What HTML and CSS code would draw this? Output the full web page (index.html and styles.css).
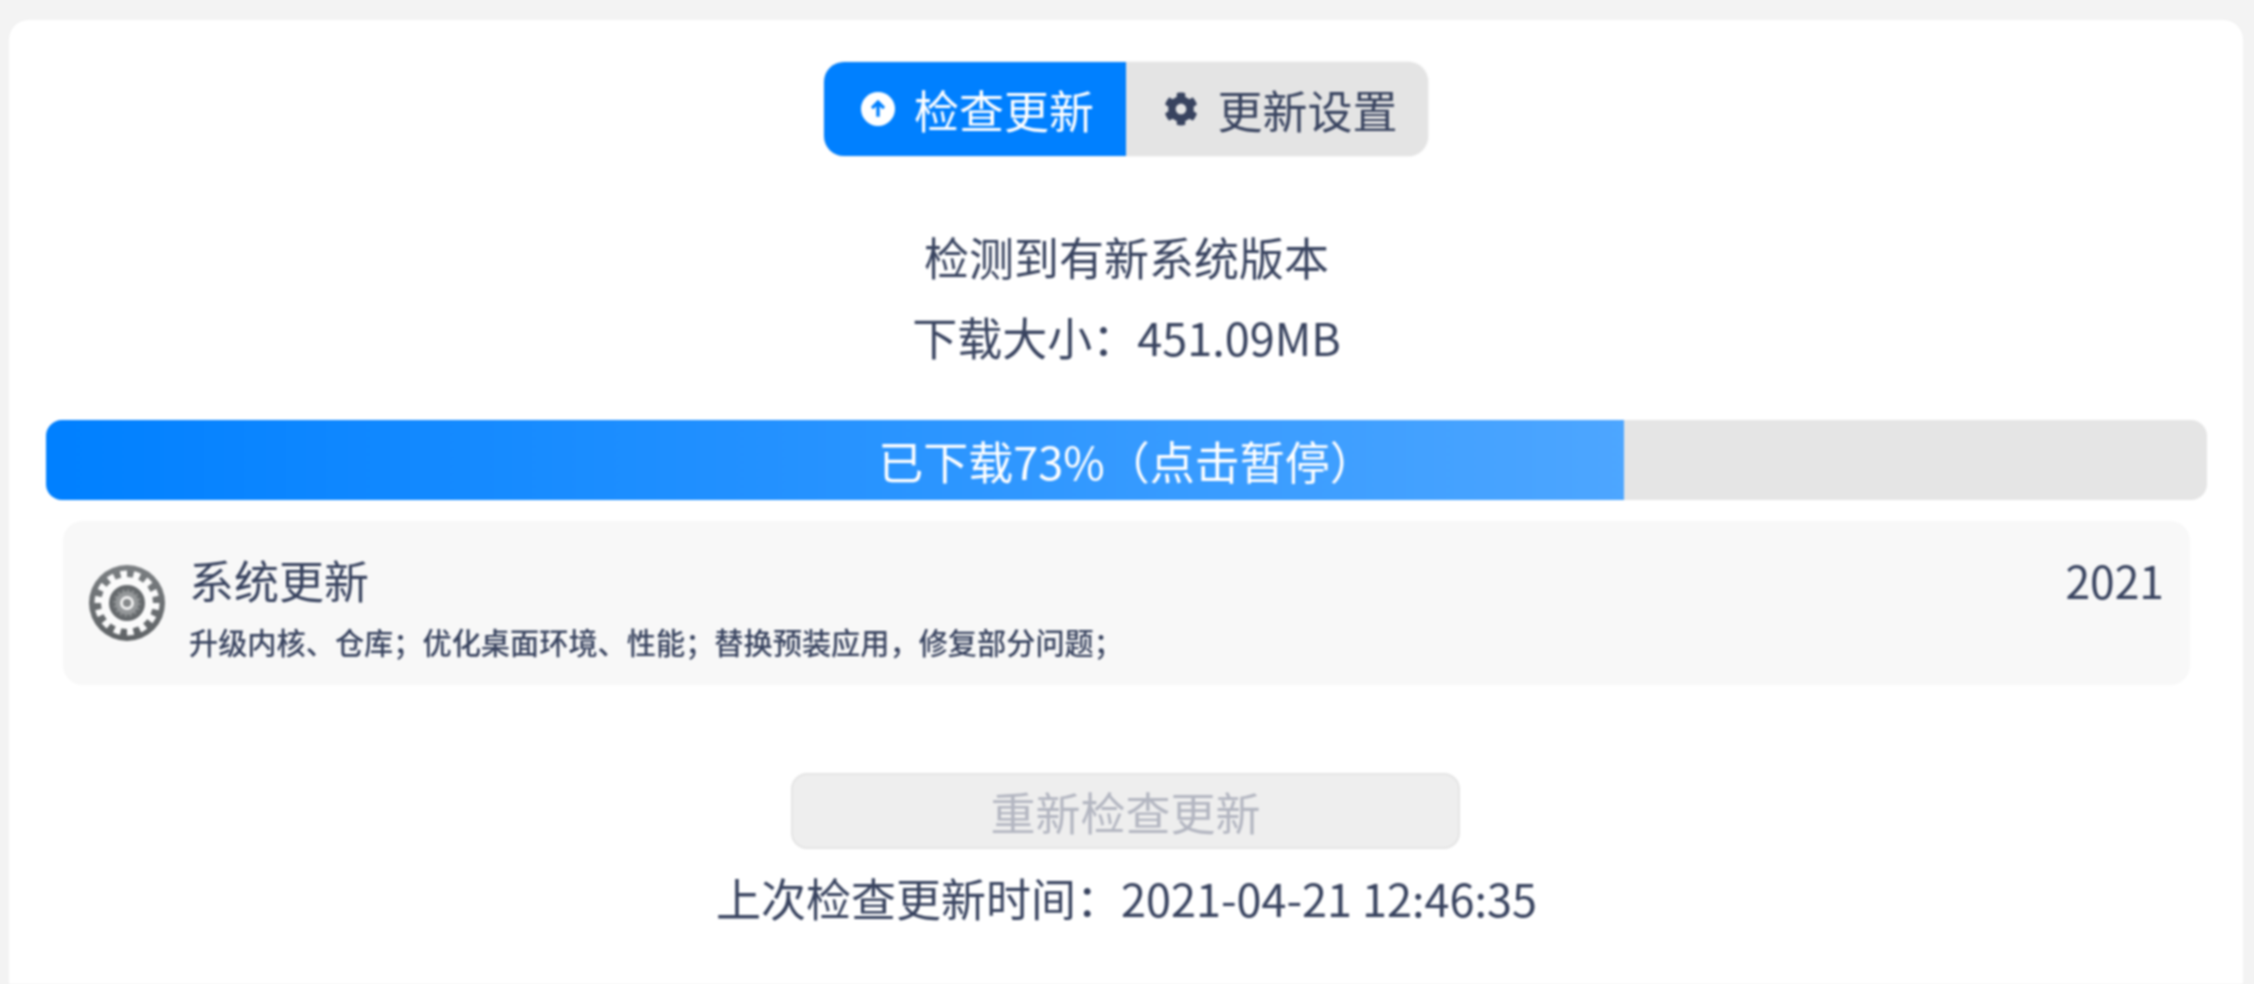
FILE: index.html
```html
<!DOCTYPE html>
<html lang="zh-CN">
<head>
    <meta charset="UTF-8">
    <meta name="viewport" content="width=device-width, initial-scale=1.0">
    <title>系统更新</title>
    <link rel="stylesheet" href="styles.css">
</head>
<body>

    <div class="card">
        <div class="tabs">
            <button class="tab tab-active">
                <svg class="tab-icon" viewBox="0 0 24 24">
                    <circle cx="12" cy="12" r="12" fill="#fff"/>
                    <path d="M12 17.5V7.5M7.8 11.4 12 7.2l4.2 4.2" fill="none" stroke="#0080ff" stroke-width="2.4"/>
                </svg>
                检查更新
            </button>
            <button class="tab tab-settings">
                <svg class="tab-icon" viewBox="0 0 512 512"><path fill="currentColor" d="M487.4 315.7l-42.6-24.6c4.3-23.2 4.3-47 0-70.2l42.6-24.6c4.9-2.8 7.1-8.6 5.5-14-11.1-35.6-30-67.8-54.7-94.6-3.8-4.1-10-5.1-14.8-2.3L380.8 110c-17.9-15.4-38.5-27.3-60.8-35.1V25.8c0-5.6-3.9-10.5-9.4-11.7-36.7-8.2-74.3-7.8-109.2 0-5.5 1.2-9.4 6.1-9.4 11.7V75c-22.2 7.9-42.8 19.8-60.8 35.1L88.7 85.5c-4.9-2.8-11-1.9-14.8 2.3-24.7 26.7-43.6 58.9-54.7 94.6-1.7 5.4.6 11.2 5.5 14L67.3 221c-4.3 23.2-4.3 47 0 70.2l-42.6 24.6c-4.9 2.8-7.1 8.6-5.5 14 11.1 35.6 30 67.8 54.7 94.6 3.8 4.1 10 5.1 14.8 2.3l42.6-24.6c17.9 15.4 38.5 27.3 60.8 35.1v49.2c0 5.6 3.9 10.5 9.4 11.7 36.7 8.2 74.3 7.8 109.2 0 5.5-1.2 9.4-6.1 9.4-11.7v-49.2c22.2-7.9 42.8-19.8 60.8-35.1l42.6 24.6c4.9 2.8 11 1.9 14.8-2.3 24.7-26.7 43.6-58.9 54.7-94.6 1.5-5.5-.7-11.3-5.6-14.1zM256 336c-44.1 0-80-35.9-80-80s35.9-80 80-80 80 35.9 80 80-35.9 80-80 80z"/></svg>
                更新设置
            </button>
        </div>

        <p class="status status-first">检测到有新系统版本</p>
        <p class="status">下载大小：451.09MB</p>

        <div class="progress">
            <div class="progress-fill" style="width: 73%"></div>
            <span class="progress-label">已下载73%（点击暂停）</span>
        </div>

        <div class="update-item">
            <svg class="update-icon" viewBox="0 0 76 76">
                <defs>
                    <linearGradient id="gearBg" x1="0" y1="0" x2="0" y2="1">
                        <stop offset="0" stop-color="#7b7f82"/>
                        <stop offset="1" stop-color="#5f6366"/>
                    </linearGradient>
                </defs>
                <circle cx="38" cy="38" r="38" fill="url(#gearBg)"/>
                <circle cx="38" cy="38" r="26" fill="#fbfbfb"/>
                <circle cx="38" cy="38" r="28.5" fill="none" stroke="#fbfbfb" stroke-width="8" pathLength="28" stroke-dasharray="1 1"/>
                <circle cx="38" cy="38" r="18" fill="#65696c"/>
                <circle cx="38" cy="38" r="11.5" fill="#95989a"/>
                <circle cx="38" cy="38" r="12.5" fill="none" stroke="#8b8e90" stroke-width="2.5" pathLength="32" stroke-dasharray="1 1"/>
                <circle cx="38" cy="38" r="7" fill="#f0f0f0"/>
                <circle cx="38" cy="38" r="4" fill="#85888a"/>
            </svg>
            <div class="update-body">
                <div class="update-title">系统更新</div>
                <div class="update-desc">升级内核、仓库；优化桌面环境、性能；替换预装应用，修复部分问题；</div>
            </div>
            <div class="update-year">2021</div>
        </div>

        <button class="recheck" disabled>重新检查更新</button>
        <p class="last-check">上次检查更新时间：2021-04-21 12:46:35</p>
    </div>

</body>
</html>
```

FILE: styles.css
```css
* {
    box-sizing: border-box;
}
html, body {
    height: 100%;
}
body {
    margin: 0;
    padding: 20px 11px 0 9px;
    overflow: hidden;
    background: #f3f3f3;
    color: #38435f;
    font-family: "Noto Sans CJK SC", "Noto Sans", sans-serif;
    font-size: 45px;
}
button {
    font-family: inherit;
    font-size: inherit;
}
.card {
    height: 100%;
    padding: 42px 36px 0 37px;
    background: #fff;
    border-radius: 20px 20px 0 0;
    display: flex;
    flex-direction: column;
    align-items: center;
    filter: blur(0.8px);
}
.tabs {
    display: flex;
    height: 94px;
    margin-right: 2px;
}
.tab {
    width: 302px;
    padding: 0;
    display: flex;
    align-items: center;
    justify-content: center;
    gap: 19px;
    background: #e4e4e4;
    color: #38435f;
    border: none;
    border-radius: 0 20px 20px 0;
    box-shadow: 0 0 2px rgba(0, 0, 0, 0.12);
}
.tab-active {
    padding-left: 6px;
    background: #0080ff;
    color: #fff;
    border-radius: 20px 0 0 20px;
}
.tab-settings {
    padding-left: 9px;
}
.tab-icon {
    width: 34px;
    height: 34px;
}
.status {
    margin: 0;
    line-height: 80px;
}
.status-first {
    margin-top: 61px;
}
.progress {
    position: relative;
    width: 100%;
    height: 80px;
    margin-top: 43px;
    background: #e5e5e5;
    border-radius: 16px;
    overflow: hidden;
    display: flex;
    align-items: center;
    justify-content: center;
}
.progress-fill {
    position: absolute;
    left: 0;
    top: 0;
    bottom: 0;
    background: linear-gradient(90deg, #0080ff, #4da6ff);
}
.progress-label {
    position: relative;
    color: #fff;
}
.update-item {
    align-self: stretch;
    height: 164px;
    margin: 21px 17px 0;
    padding: 27px 26px 0 26px;
    background: #f8f8f8;
    border-radius: 20px;
    display: flex;
    align-items: flex-start;
}
.update-icon {
    width: 76px;
    height: 76px;
    margin-top: 17px;
    margin-right: 24px;
    flex-shrink: 0;
}
.update-body {
    flex: 1;
}
.update-title {
    line-height: 64px;
}
.update-desc {
    margin-top: 5px;
    font-size: 29.2px;
    font-weight: 500;
    line-height: 48px;
}
.update-year {
    font-size: 44.4px;
    line-height: 64px;
}
.recheck {
    width: 669px;
    height: 76px;
    margin-top: 88px;
    margin-right: 2px;
    padding: 0;
    background: #eee;
    color: #b3b6c1;
    border: 2px solid #e4e4e4;
    border-radius: 16px;
}
.last-check {
    margin: 17px 0 0;
    line-height: 64px;
}
```
